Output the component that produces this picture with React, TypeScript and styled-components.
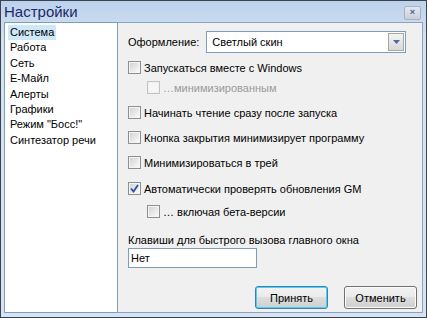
import React from "react";
import styled, { createGlobalStyle } from "styled-components";

const Global = createGlobalStyle`
  html, body { margin: 0; padding: 0; background: #fff; }
  body { font-family: "Liberation Sans", Arial, sans-serif; font-size: 11px; }
`;

const Window = styled.div`
  box-sizing: border-box;
  width: 427px;
  height: 318px;
  border: 1px solid #3b4250;
  background: linear-gradient(#bcd2ec, #d4e2f2 40px, #d6e3f2);
  display: flex;
  flex-direction: column;
`;

const TitleBar = styled.div`
  height: 21px;
  display: flex;
  align-items: center;
  justify-content: space-between;
  padding: 0 5px 0 3px;
`;

const Title = styled.span`
  font-size: 15px;
  color: #1c2a66;
  font-family: "Liberation Sans", Arial, sans-serif;
`;

const CloseBtn = styled.div`
  width: 15px;
  height: 12px;
  border: 1px solid #a8b2bf;
  border-radius: 2px;
  background: linear-gradient(#e6e9ee, #c9ced6);
  color: #4a5f9a;
  font-size: 9px;
  line-height: 11px;
  text-align: center;
  font-weight: bold;
  margin-top: 2px;
`;

const Body = styled.div`
  flex: 1;
  display: flex;
  padding: 0 3px 4px 3px;
`;

const List = styled.div`
  box-sizing: border-box;
  width: 114px;
  background: #fff;
  border: 1px solid #7f9db9;
  padding: 2px 3px;
  display: flex;
  flex-direction: column;
`;

const ListItem = styled.div<{ $sel?: boolean }>`
  height: 15.4px;
  line-height: 15px;
  padding: 0 2px;
  align-self: flex-start;
  color: #000;
  font-size: 11px;
  background: ${(p) => (p.$sel ? "#cde8f8" : "transparent")};
`;

const Panel = styled.div`
  flex: 1;
  box-sizing: border-box;
  background: #f0f0f0;
  border: 1px solid #8aa3c0;
  border-left: none;
  padding: 8px 16px 0 10px;
  display: flex;
  flex-direction: column;
`;

const SkinRow = styled.div`
  display: flex;
  align-items: center;
  gap: 7px;
  height: 22px;
  margin-bottom: 8px;
  font-size: 11px;
`;

const Combo = styled.div`
  flex: 1;
  box-sizing: border-box;
  height: 22px;
  border: 1px solid #7f9db9;
  background: #fff;
  display: flex;
  align-items: center;
  padding-left: 5px;
`;

const ComboText = styled.span`
  flex: 1;
  font-size: 11px;
`;

const ComboBtn = styled.div`
  width: 16px;
  height: 18px;
  margin-right: 1px;
  border: 1px solid #a7a7a7;
  box-sizing: border-box;
  background: linear-gradient(#f4f4f4, #d8d8d8);
  display: flex;
  align-items: center;
  justify-content: center;
`;

const CheckRow = styled.div<{ $indent?: boolean; $gap: number }>`
  display: flex;
  align-items: center;
  gap: 3px;
  height: 13px;
  padding-left: ${(p) => (p.$indent ? 19 : 0)}px;
  margin-bottom: ${(p) => p.$gap}px;
`;

const Box = styled.div<{ $disabled?: boolean }>`
  box-sizing: border-box;
  width: 13px;
  height: 13px;
  border: 1px solid ${(p) => (p.$disabled ? "#c4c4c4" : "#8e8f8f")};
  background: ${(p) =>
    p.$disabled
      ? "#f6f6f6"
      : "linear-gradient(135deg, #cfd0d0, #f2f2f2 75%, #fff)"};
  box-shadow: inset 0 0 0 1px ${(p) => (p.$disabled ? "#f0f0f0" : "#f4f4f4")};
  display: flex;
  align-items: center;
  justify-content: center;
`;

const CheckLabel = styled.span<{ $disabled?: boolean }>`
  font-size: 11px;
  color: ${(p) => (p.$disabled ? "#9a9a9a" : "#000")};
  white-space: nowrap;
`;

const HotkeyLabel = styled.div`
  font-size: 11px;
  margin-bottom: 2px;
`;

const Input = styled.div`
  box-sizing: border-box;
  width: 129px;
  height: 20px;
  border: 1px solid #7f9db9;
  background: #fff;
  padding-left: 2px;
  font-size: 11px;
  line-height: 18px;
`;

const Buttons = styled.div`
  display: flex;
  justify-content: flex-end;
  gap: 16px;
  margin-top: 18px;
  margin-right: -11px;
`;

const Button = styled.div<{ $focus?: boolean }>`
  box-sizing: border-box;
  width: 73px;
  height: 23px;
  border: 1px solid ${(p) => (p.$focus ? "#3c7fb1" : "#707070")};
  border-radius: 3px;
  background: linear-gradient(#f2f2f2 0%, #ebebeb 45%, #dddddd 50%, #cfcfcf 100%);
  box-shadow: inset 0 0 0 1px ${(p) => (p.$focus ? "#48d2f8" : "#fbfbfb")};
  display: flex;
  align-items: center;
  justify-content: center;
  font-size: 11px;
  color: #000;
`;

const items = [
  "Система",
  "Работа",
  "Сеть",
  "Е-Майл",
  "Алерты",
  "Графики",
  'Режим "Босс!"',
  "Синтезатор речи",
];

const Check = () => (
  <svg width="9" height="9" viewBox="0 0 9 9">
    <path d="M1 4.5 L3.5 7.5 L8 1" stroke="#2b4fa8" strokeWidth="1.8" fill="none" />
  </svg>
);

type Opt = { label: string; indent?: boolean; disabled?: boolean; checked?: boolean; gap: number };

const opts: Opt[] = [
  { label: "Запускаться вместе с Windows", gap: 7 },
  { label: "…минимизированным", indent: true, disabled: true, gap: 12 },
  { label: "Начинать чтение сразу после запуска", gap: 12 },
  { label: "Кнопка закрытия минимизирует программу", gap: 12 },
  { label: "Минимизироваться в трей", gap: 13 },
  { label: "Автоматически проверять обновления GM", checked: true, gap: 10 },
  { label: "… включая бета-версии", indent: true, gap: 16 },
];

export default function App() {
  return (
    <>
      <Global />
      <Window>
        <TitleBar>
          <Title>Настройки</Title>
          <CloseBtn>×</CloseBtn>
        </TitleBar>
        <Body>
          <List>
            {items.map((t, i) => (
              <ListItem key={t} $sel={i === 0}>
                {t}
              </ListItem>
            ))}
          </List>
          <Panel>
            <SkinRow>
              <span>Оформление:</span>
              <Combo>
                <ComboText>Светлый скин</ComboText>
                <ComboBtn>
                  <svg width="7" height="4" viewBox="0 0 7 4">
                    <path d="M0 0 H7 L3.5 4 Z" fill="#4a6aa0" />
                  </svg>
                </ComboBtn>
              </Combo>
            </SkinRow>
            {opts.map((o) => (
              <CheckRow key={o.label} $indent={o.indent} $gap={o.gap}>
                <Box $disabled={o.disabled}>{o.checked && <Check />}</Box>
                <CheckLabel $disabled={o.disabled}>{o.label}</CheckLabel>
              </CheckRow>
            ))}
            <HotkeyLabel>Клавиши для быстрого вызова главного окна</HotkeyLabel>
            <Input>Нет</Input>
            <Buttons>
              <Button $focus>Принять</Button>
              <Button>Отменить</Button>
            </Buttons>
          </Panel>
        </Body>
      </Window>
    </>
  );
}
